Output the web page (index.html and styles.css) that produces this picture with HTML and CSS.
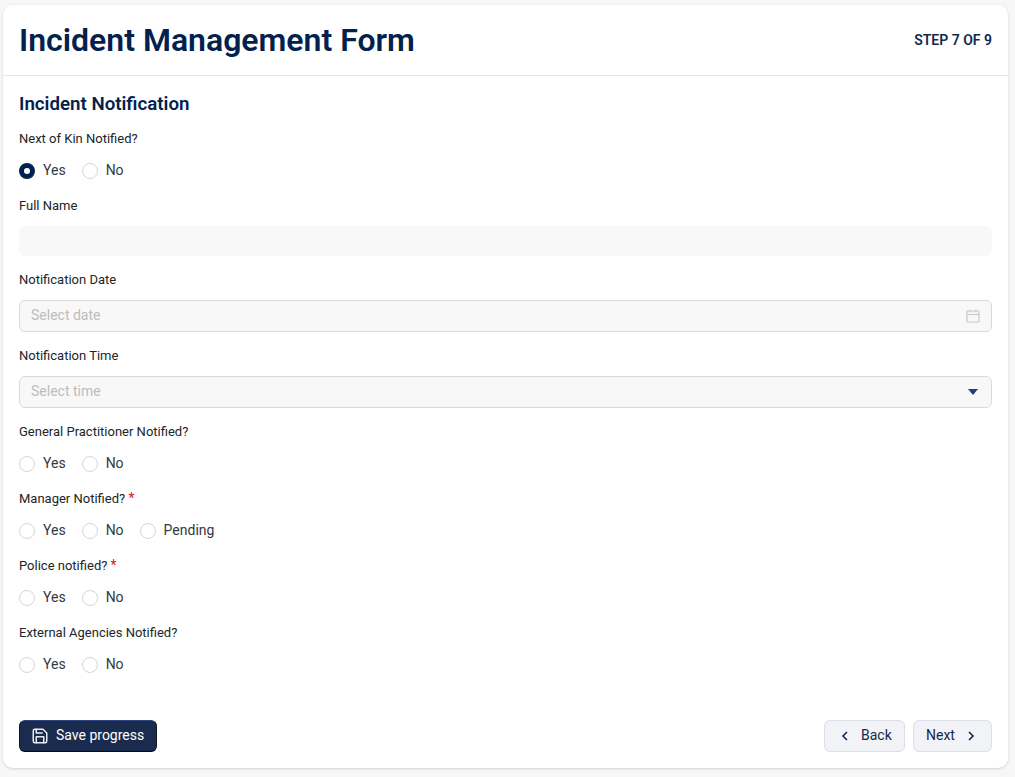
FILE: index.html
```html
<!DOCTYPE html>
<html lang="en">
<head>
  <meta charset="UTF-8" />
  <title>Incident Management Form</title>
  <meta name="viewport" content="width=device-width, initial-scale=1.0" />
  <link rel="stylesheet" href="styles.css">
</head>
<body>
  <div class="card">
    <div class="header">
      <h1>Incident Management Form</h1>
      <div class="step">STEP 7 OF 9</div>
    </div>

    <div class="content">
      <h2>Incident Notification</h2>

      <div class="field">
        <div class="label">Next of Kin Notified?</div>
        <div class="radios">
          <div class="radio"><span class="dot checked"></span>Yes</div>
          <div class="radio"><span class="dot"></span>No</div>
        </div>
      </div>

      <div class="field">
        <div class="label">Full Name</div>
        <div class="input name"></div>
      </div>

      <div class="field">
        <div class="label">Notification Date</div>
        <div class="input boxed">
          <span class="placeholder">Select date</span>
          <svg width="14" height="14" viewBox="0 0 14 14" fill="none" stroke="#c8c8c8" stroke-width="1.2">
            <rect x="1" y="2" width="12" height="11" rx="1"/>
            <path d="M1 5.5h12M4 0.5v3M10 0.5v3"/>
          </svg>
        </div>
      </div>

      <div class="field">
        <div class="label">Notification Time</div>
        <div class="input boxed">
          <span class="placeholder">Select time</span>
          <svg class="caret" width="10" height="6" viewBox="0 0 10 6"><path d="M0 0h10L5 6z" fill="#1f3f7a"/></svg>
        </div>
      </div>

      <div class="field">
        <div class="label">General Practitioner Notified?</div>
        <div class="radios">
          <div class="radio"><span class="dot"></span>Yes</div>
          <div class="radio"><span class="dot"></span>No</div>
        </div>
      </div>

      <div class="field">
        <div class="label">Manager Notified? <span class="req">*</span></div>
        <div class="radios">
          <div class="radio"><span class="dot"></span>Yes</div>
          <div class="radio"><span class="dot"></span>No</div>
          <div class="radio"><span class="dot"></span>Pending</div>
        </div>
      </div>

      <div class="field">
        <div class="label">Police notified? <span class="req">*</span></div>
        <div class="radios">
          <div class="radio"><span class="dot"></span>Yes</div>
          <div class="radio"><span class="dot"></span>No</div>
        </div>
      </div>

      <div class="field">
        <div class="label">External Agencies Notified?</div>
        <div class="radios">
          <div class="radio"><span class="dot"></span>Yes</div>
          <div class="radio"><span class="dot"></span>No</div>
        </div>
      </div>
    </div>

    <div class="footer">
      <button class="btn save">
        <svg width="18" height="18" viewBox="0 0 24 24" fill="none" stroke="#e8ebf2" stroke-width="2" stroke-linecap="round" stroke-linejoin="round">
          <path d="M5 3h11l5 5v11a2 2 0 0 1-2 2H5a2 2 0 0 1-2-2V5a2 2 0 0 1 2-2z"/>
          <path d="M17 21v-8H7v8M7 3v5h8"/>
        </svg>
        Save progress
      </button>
      <div class="nav">
        <button class="btn plain back">
          <svg width="12" height="12" viewBox="0 0 12 12" fill="none" stroke="#0f2a52" stroke-width="1.6"><path d="M8 2 4 6l4 4"/></svg>
          Back
        </button>
        <button class="btn plain next">
          Next
          <svg width="12" height="12" viewBox="0 0 12 12" fill="none" stroke="#0f2a52" stroke-width="1.6"><path d="m4 2 4 4-4 4"/></svg>
        </button>
      </div>
    </div>
  </div>
</body>
</html>
```

FILE: styles.css
```css
* {
  box-sizing: border-box;
}

body {
  margin: 0;
  padding: 5px 7px 9px 3px;
  height: 777px;
  background: #f7f7f7;
  font-family: Roboto, "Liberation Sans", sans-serif;
  color: #212529;
  overflow: hidden;
}

.card {
  display: flex;
  flex-direction: column;
  height: 763px;
  background: #fff;
  border-radius: 10px;
  box-shadow: 0 1px 3px rgba(0, 0, 0, 0.15);
}

.header {
  display: flex;
  justify-content: space-between;
  align-items: center;
  height: 71px;
  padding: 0 16px;
  border-bottom: 1px solid #e6e6e6;
}

h1 {
  margin: 0;
  font-size: 32px;
  font-weight: 600;
  color: #03214d;
}

.step {
  font-size: 14px;
  font-weight: 600;
  color: #12294d;
}

.content {
  padding: 16px 16px 0;
}

h2 {
  margin: 0 0 12px;
  font-size: 18.72px;
  line-height: 24px;
  font-weight: 600;
  color: #03214d;
}

.field {
  margin-bottom: 13px;
}

.label {
  font-size: 13px;
  line-height: 20px;
  padding-top: 1px;
  height: 20px;
  margin-bottom: 11px;
  color: #212529;
}

.req {
  font-size: 14px;
  line-height: 0;
  color: #e81010;
}

.radios {
  display: flex;
  gap: 16px;
  height: 22px;
  margin-bottom: 14px;
}

.radio {
  display: flex;
  align-items: center;
  gap: 8px;
  font-size: 14px;
  color: #343a40;
}

.dot {
  width: 16px;
  height: 16px;
  margin-top: 2px;
  border: 1px solid #d6d6d6;
  border-radius: 50%;
  background: #fff;
}

.dot.checked {
  border: 5px solid #03214d;
}

.input {
  background: #f8f8f8;
  border-radius: 6px;
}

.input.name {
  height: 30px;
}

.input.boxed {
  display: flex;
  justify-content: space-between;
  align-items: center;
  height: 32px;
  padding: 0 11px;
  border: 1px solid #dadada;
}

.placeholder {
  margin-top: -2px;
  font-size: 14px;
  color: #bdbdbd;
}

.caret {
  margin-right: 2px;
}

.footer {
  display: flex;
  justify-content: space-between;
  margin-top: auto;
  padding: 0 16px 16px;
}

.nav {
  display: flex;
  gap: 8px;
}

.btn {
  display: flex;
  align-items: center;
  height: 32px;
  padding-bottom: 3px;
  font-family: inherit;
  font-size: 14px;
  white-space: nowrap;
  border-radius: 6px;
}

.btn svg {
  margin-top: 2px;
}

.btn.save {
  width: 138px;
  gap: 7px;
  padding-left: 11px;
  padding-right: 0;
  color: #fff;
  background: #1a2b4d;
  border: 1px solid;
  border-color: #2a4480 #0d1526 #050a14;
}

.btn.plain {
  gap: 10px;
  color: #12294d;
  background: #f2f3f6;
  border: 1px solid #dcdfe5;
}

.btn.back {
  width: 81px;
  padding-left: 14px;
  padding-right: 12px;
}

.btn.next {
  width: 79px;
  padding-left: 12px;
  padding-right: 14px;
}
```
